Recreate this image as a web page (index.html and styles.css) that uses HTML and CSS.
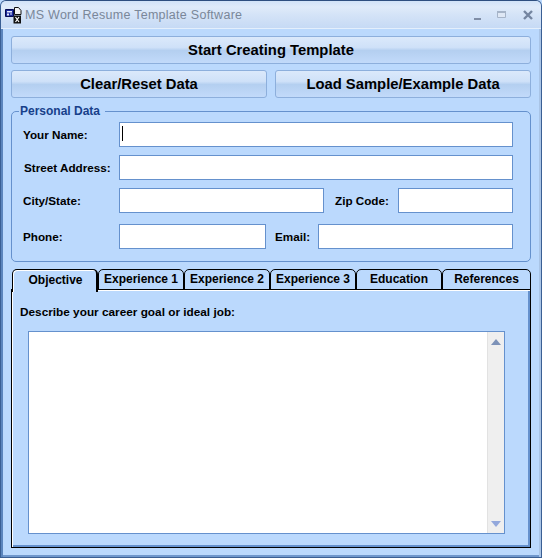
FILE: index.html
```html
<!doctype html>
<html>
<head>
    <title>MS Word Resume Template Software</title>
    <link rel="stylesheet" href="styles.css">
</head>
<body>
    <div class="window">
        <header class="titlebar">
            <svg class="app-icon" viewBox="0 0 17 17" width="17" height="17">
                <path d="M0.500 2.500h8v7h-8z" fill="#1c2a9c" stroke="#050a50"/>
                <path d="M2 4h5v1.500H2zM2 6.500h2v2H2zM5 6.500h2v1H5z" fill="#e8ecff"/>
                <path d="M9.500 0.500h4l2.500 3v4h-6.500z" fill="#f4f4f4" stroke="#111"/>
                <path d="M8.500 8.500h7.500v8h-7.500z" fill="#111"/>
                <path d="M10.500 10l3.500 5M14 10l-3.500 5" stroke="#fff" stroke-width="1.200"/>
            </svg>
            <span class="title">MS Word Resume Template Software</span>
            <div class="controls">
                <svg viewBox="0 0 62 12" width="62" height="12">
                    <path d="M0 9h7v2H0z" fill="#7f8da6"/>
                    <path d="M23.500 2.500h8v6h-8z" fill="#dfe8f5" stroke="#a6b4c8"/>
                    <path d="M23 2h9v2h-9z" fill="#a6b4c8"/>
                    <path d="M50 2l8 8M58 2l-8 8" stroke="#7485a0" stroke-width="2.400" fill="none"/>
                </svg>
            </div>
        </header>

        <main class="content">
            <button class="btn">Start Creating Template</button>
            <div class="btn-row">
                <button class="btn">Clear/Reset Data</button>
                <button class="btn">Load Sample/Example Data</button>
            </div>

            <fieldset class="group">
                <legend>Personal Data</legend>
                <div class="row">
                    <label class="lbl lbl-name">Your Name:</label>
                    <div class="input grow"><span class="caret"></span></div>
                </div>
                <div class="row">
                    <label class="lbl lbl-street">Street Address:</label>
                    <div class="input grow"></div>
                </div>
                <div class="row">
                    <label class="lbl">City/State:</label>
                    <div class="input city"></div>
                    <label class="lbl lbl-zip">Zip Code:</label>
                    <div class="input grow"></div>
                </div>
                <div class="row row-last">
                    <label class="lbl">Phone:</label>
                    <div class="input phone"></div>
                    <label class="lbl lbl-email">Email:</label>
                    <div class="input grow"></div>
                </div>
            </fieldset>

            <div class="tabs">
                <div class="tab active">Objective</div>
                <div class="tab">Experience 1</div>
                <div class="tab">Experience 2</div>
                <div class="tab">Experience 3</div>
                <div class="tab">Education</div>
                <div class="tab">References</div>
            </div>
            <section class="panel">
                <p class="prompt">Describe your career goal or ideal job:</p>
                <div class="memo">
                    <div class="scrollbar">
                        <span class="arrow up"></span>
                        <span class="arrow down"></span>
                    </div>
                </div>
            </section>
        </main>
    </div>
</body>
</html>
```
FILE: styles.css
```css
:root {
    --face: #bbd9fd;
    --line: #6591cd;
    --frame: #5b85bd;
}

html, body {
    margin: 0;
    height: 100%;
    overflow: hidden;
}
body {
    background: var(--face);
    font-family: "Liberation Sans", Arial, sans-serif;
    color: #000;
}

.window {
    box-sizing: border-box;
    width: 542px;
    height: 558px;
    display: flex;
    flex-direction: column;
    background: var(--face);
    border: 1px solid #3a5f94;
    border-top-color: #2f4f80;
    border-radius: 6px 6px 0 0;
    box-shadow: inset 2px 0 0 var(--frame), inset -2px 0 0 #a9c4e6, inset 0 -2px 0 #6f97cc;
}

.titlebar {
    flex: none;
    height: 27px;
    display: flex;
    align-items: center;
    padding: 0 5px 0 4px;
    border-bottom: 1px solid #e4effc;
    border-radius: 5px 5px 0 0;
    background: linear-gradient(#d2e3f8 0, #e0ebfa 6px, #d4e3f7 14px, #c6daf5 100%);
}
.app-icon {
    flex: none;
    margin-top: 2px;
}
.title {
    margin-left: 3px;
    font-size: 12.5px;
    letter-spacing: 0.27px;
    color: #7a8799;
}
.controls {
    margin-left: auto;
    height: 12px;
    margin-top: -3px;
}

.content {
    flex: 1;
    display: flex;
    flex-direction: column;
    padding: 7px 10px 0;
}

.btn {
    height: 28px;
    padding: 0;
    border: 1px solid #8dafdc;
    border-radius: 3px;
    background: linear-gradient(#dbe9fb 0, #cfe1f8 40%, #b4cff0 52%, #c2dafa 100%);
    font-family: inherit;
    font-size: 14.8px;
    font-weight: bold;
    color: #000;
}
.content > .btn {
    width: 520px;
}
.btn-row {
    display: flex;
    gap: 8px;
    margin-top: 6px;
}
.btn-row .btn {
    flex: 1;
}

.group {
    width: 520px;
    box-sizing: border-box;
    margin: 6px 0 0;
    padding: 4px 17px 12px 11px;
    border: 1px solid var(--line);
    border-radius: 5px;
}
.group legend {
    margin-left: -4px;
    padding: 0 5px 0 1px;
    font-size: 12px;
    font-weight: bold;
    color: #17408a;
}

.row {
    display: flex;
    align-items: center;
    height: 25px;
    margin-bottom: 8px;
}
.row:nth-of-type(3) {
    margin-bottom: 11px;
}
.row-last {
    margin-bottom: 0;
}
.lbl {
    flex: none;
    width: 96px;
    font-size: 11.7px;
    font-weight: bold;
}
.lbl-street {
    white-space: nowrap;
    padding-left: 1px;
    width: 95px;
}
.lbl-zip {
    width: 74px;
    padding-left: 11px;
    box-sizing: border-box;
}
.lbl-email {
    width: 52px;
    padding-left: 9px;
    box-sizing: border-box;
}

.input {
    box-sizing: border-box;
    height: 25px;
    background: #fff;
    border: 1px solid var(--line);
    position: relative;
}
.grow {
    flex: 1;
}
.city {
    width: 205px;
}
.phone {
    width: 147px;
}
.caret {
    position: absolute;
    left: 2px;
    top: 3px;
    width: 1px;
    height: 15px;
    background: #000;
}

.tabs {
    display: flex;
    height: 21px;
    margin-top: 7px;
    padding-left: 1px;
    position: relative;
    z-index: 1;
}
.tab {
    box-sizing: border-box;
    flex: none;
    width: 86px;
    height: 21px;
    border: 1px solid #000;
    border-radius: 5px 5px 0 0;
    font-size: 12px;
    font-weight: bold;
    line-height: 19px;
    text-align: center;
}
.tab:last-child {
    width: 89px;
}
.tab.active {
    height: 23px;
    border-right-width: 2px;
    border-bottom: none;
    box-shadow: inset 1px 1px 0 #fff;
    background: var(--face);
    padding-left: 2px;
    line-height: 21px;
}

.panel {
    box-sizing: border-box;
    width: 520px;
    height: 259px;
    margin-top: -1px;
    padding: 15px 25px 0 16px;
    border: 1px solid #000;
    box-shadow: inset 1px 1px 0 #fff, inset -2px -2px 0 var(--line);
}
.prompt {
    margin: 0 0 0 -8px;
    font-size: 11.8px;
    font-weight: bold;
}
.memo {
    box-sizing: border-box;
    height: 203px;
    margin-top: 12px;
    background: #fff;
    border: 1px solid var(--line);
    display: flex;
    justify-content: flex-end;
}
.scrollbar {
    width: 17px;
    display: flex;
    flex-direction: column;
    justify-content: space-between;
    align-items: center;
    padding: 7px 0 6px;
    box-sizing: border-box;
    background: #efefef;
    border-left: 1px solid #e2e2e2;
}
.arrow {
    width: 0;
    height: 0;
    border-left: 5px solid transparent;
    border-right: 5px solid transparent;
}
.arrow.up {
    border-bottom: 6px solid #7d92b8;
}
.arrow.down {
    border-top: 6px solid #93a8dc;
}
```
